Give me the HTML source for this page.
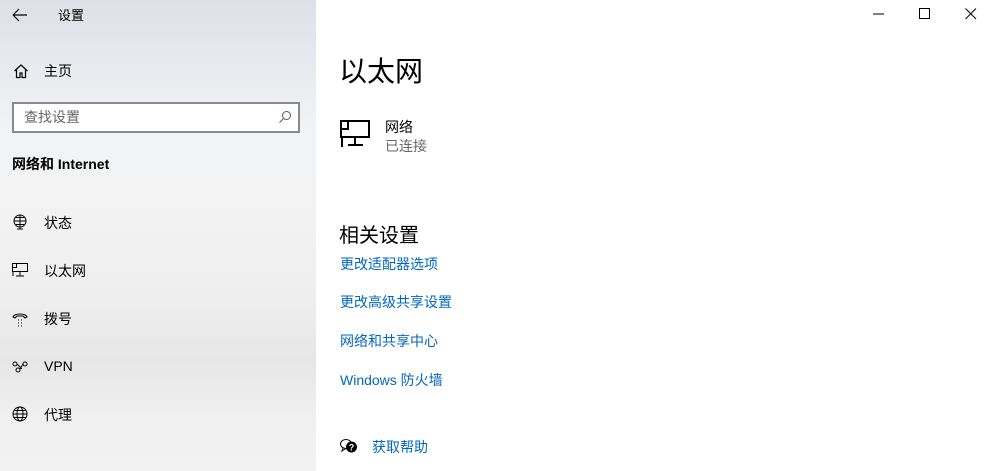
<!DOCTYPE html>
<html><head><meta charset="utf-8"><style>
*{margin:0;padding:0;box-sizing:border-box}
body{width:988px;height:471px;overflow:hidden;background:#fff;font-family:"Liberation Sans","Noto Sans CJK SC",sans-serif;color:#000;position:relative}
.side{position:absolute;left:0;top:0;width:316px;height:471px;background:linear-gradient(180deg,#dde1e6 0px,#e6e9ed 60px,#f2f3f4 130px,#f3f3f3 200px,#eeeeee 300px,#e6e6e6 360px,#f0f0f0 420px,#f2f2f2 471px)}
.t{position:absolute;font-size:14px;white-space:nowrap}
svg{position:absolute}
.link{color:#0067c0;font-size:14px;position:absolute;white-space:nowrap}
</style></head><body>
<div class="side"></div>
<svg style="left:12px;top:8px" width="16" height="14"><path d="M1 7H15M1 7L7 1M1 7L7 13" stroke="#000" stroke-width="1.2" fill="none"/></svg>
<div class="t" style="left:58px;top:5px;font-size:13px">设置</div>
<svg style="left:13px;top:63px" width="16" height="16"><path d="M1.5 8L8 2l6.5 6M3.5 6.5V14.5h3.5V10h2v4.5h3.5V6.5" stroke="#000" stroke-width="1.2" fill="none"/></svg>
<div class="t" style="left:44px;top:61px">主页</div>
<div style="position:absolute;left:12px;top:102px;width:288px;height:31px;border:2px solid #8a8a8a;background:#fff"></div>
<div class="t" style="left:24px;top:107px;color:#666">查找设置</div>
<svg style="left:278px;top:110px" width="14" height="14"><circle cx="8.5" cy="5.5" r="4" stroke="#555" fill="none"/><path d="M5.5 8.5L1.5 12.5" stroke="#555"/></svg>
<div class="t" style="left:12px;top:154px;font-weight:bold;font-size:14px">网络和 Internet</div>
<svg style="left:12px;top:214px" width="16" height="16"><circle cx="8" cy="7" r="6" stroke="#000" fill="none"/><path d="M2 7H14M8 1V13M4 3.5h8M4 10.5h8M5 15h6M8 13v2" stroke="#000" fill="none"/></svg>
<div class="t" style="left:44px;top:213px">状态</div>
<svg style="left:12px;top:263px" width="16" height="14"><rect x="0.5" y="0.5" width="15" height="8" stroke="#000" fill="none"/><rect x="0.5" y="0.5" width="4" height="4" stroke="#000" fill="none"/><path d="M1 8V13M8 9v4M4 13h8" stroke="#000"/></svg>
<div class="t" style="left:44px;top:261px">以太网</div>
<svg style="left:12px;top:311px" width="16" height="16"><path d="M1 6C2 2 14 2 15 6L13 7L11 5H5L3 7Z" stroke="#000" fill="none"/><path d="M6 9h1M9 9h1M6 12h1M9 12h1M6 15h1M9 15h1" stroke="#000"/></svg>
<div class="t" style="left:44px;top:309px">拨号</div>
<svg style="left:12px;top:361px" width="16" height="12"><circle cx="3" cy="3" r="2" stroke="#000" fill="none"/><circle cx="13" cy="3" r="2" stroke="#000" fill="none"/><circle cx="6" cy="9" r="2" stroke="#000" fill="none"/><path d="M5 3L10 8M11 3L8 8" stroke="#000"/></svg>
<div class="t" style="left:44px;top:358px">VPN</div>
<svg style="left:12px;top:406px" width="16" height="16"><circle cx="8" cy="8" r="7" stroke="#000" fill="none"/><ellipse cx="8" cy="8" rx="3" ry="7" stroke="#000" fill="none"/><path d="M1 8H15M2.5 4.5h11M2.5 11.5h11" stroke="#000"/></svg>
<div class="t" style="left:44px;top:405px">代理</div>

<svg style="left:873px;top:13px" width="12" height="2"><path d="M0 1H11" stroke="#000"/></svg>
<svg style="left:919px;top:8px" width="11" height="11"><rect x="0.5" y="0.5" width="10" height="10" stroke="#000" fill="none"/></svg>
<svg style="left:965px;top:8px" width="12" height="12"><path d="M0.5 0.5L11 11M11 0.5L0.5 11" stroke="#000"/></svg>

<div class="t" style="left:339px;top:50px;font-size:28px">以太网</div>
<svg style="left:340px;top:120px" width="30" height="28"><rect x="1" y="1" width="28" height="16" stroke="#000" stroke-width="2" fill="none"/><rect x="1" y="1" width="7" height="8" stroke="#000" stroke-width="2" fill="none"/><path d="M2 17v10M15 17v8M8 25h15" stroke="#000" stroke-width="2"/></svg>
<div class="t" style="left:385px;top:117px">网络</div>
<div class="t" style="left:385px;top:136px;color:#666">已连接</div>
<div class="t" style="left:339px;top:219px;font-size:20px">相关设置</div>
<div class="link" style="left:340px;top:254px">更改适配器选项</div>
<div class="link" style="left:340px;top:292px">更改高级共享设置</div>
<div class="link" style="left:340px;top:331px">网络和共享中心</div>
<div class="link" style="left:340px;top:370px">Windows 防火墙</div>
<svg style="left:340px;top:438px" width="18" height="16"><ellipse cx="6" cy="6" rx="5.5" ry="4.5" stroke="#000" fill="none"/><path d="M3 10L2 13L6 10.5" stroke="#000" fill="none"/><circle cx="11.5" cy="9" r="5.5" fill="#000"/><text x="11.5" y="12.5" font-size="9" fill="#fff" text-anchor="middle" font-family="Liberation Sans" font-weight="bold">?</text></svg>
<div class="link" style="left:372px;top:437px">获取帮助</div>
</body></html>
